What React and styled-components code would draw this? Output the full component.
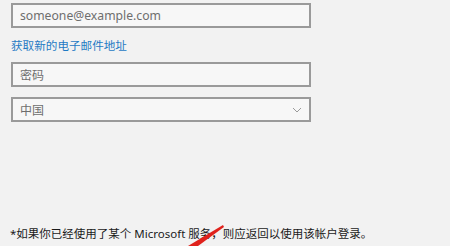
import React from "react";
import styled, { createGlobalStyle } from "styled-components";

const Global = createGlobalStyle`
  html, body { margin: 0; padding: 0; background: #f2f2f2; }
  body { font-family: "Noto Sans", "Noto Sans CJK SC", sans-serif; }
`;

const Page = styled.div`
  position: relative;
  box-sizing: border-box;
  width: 450px;
  height: 246px;
  padding: 3px 0 4px 11px;
  display: flex;
  flex-direction: column;
  overflow: hidden;
  background: #f2f2f2;
`;

const Field = styled.div`
  box-sizing: border-box;
  width: 300px;
  height: 25px;
  margin-top: ${(p) => p.$gap || 0}px;
  border: 2px solid #9a9a9a;
  background: #f7f7f7;
  display: flex;
  align-items: center;
  justify-content: space-between;
  padding: 0 7px 0 7px;
  color: #6e6e6e;
  font-size: ${(p) => p.$size || 12}px;
  font-family: "Noto Sans", "Noto Sans CJK SC", sans-serif;
`;

const Link = styled.a`
  margin-top: 10px;
  height: 14px;
  line-height: 14px;
  font-size: 11.6px;
  color: #1f7ac4;
  text-decoration: none;
  font-family: "Noto Sans CJK SC", sans-serif;
`;

const Note = styled.div`
  margin-top: auto;
  margin-left: -1px;
  height: 16px;
  line-height: 16px;
  font-size: 11.5px;
  color: #1a1a1a;
  white-space: nowrap;
  font-family: "Noto Sans", "Noto Sans CJK SC", sans-serif;
`;

const Arrow = styled.svg`
  position: absolute;
  left: 186px;
  top: 224px;
`;

const Chevron = () => (
  <svg width="10" height="6" viewBox="0 0 10 6">
    <path d="M1 1 L5 5 L9 1" fill="none" stroke="#9a9a9a" strokeWidth="1" />
  </svg>
);

export default function App() {
  return (
    <>
      <Global />
      <Page>
        <Field $size={12.2}>someone@example.com</Field>
        <Link href="#">获取新的电子邮件地址</Link>
        <Field $gap={10}>密码</Field>
        <Field $gap={10}>
          <span>中国</span>
          <Chevron />
        </Field>
        <Note>*如果你已经使用了某个 Microsoft 服务，则应返回以使用该帐户登录。</Note>
        <Arrow width="40" height="22" viewBox="0 0 40 22">
          <polygon points="37,1 38,3 12,22 2,22" fill="#e0221c" />
        </Arrow>
      </Page>
    </>
  );
}
